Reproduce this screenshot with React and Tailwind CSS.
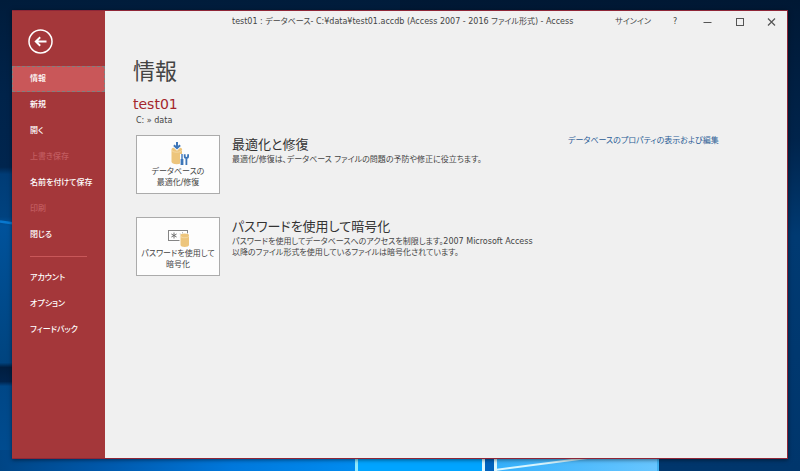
import clsx from 'clsx';

const MAIN_ITEMS = [
  { label: '情報', active: true },
  { label: '新規' },
  { label: '開く' },
  { label: '上書き保存', disabled: true },
  { label: '名前を付けて保存' },
  { label: '印刷', disabled: true },
  { label: '閉じる' },
];

const SUB_ITEMS = [
  { label: 'アカウント' },
  { label: 'オプション' },
  { label: 'フィードバック' },
];

function Wallpaper() {
  return (
    <svg
      className="absolute inset-0 h-full w-full"
      viewBox="0 0 800 471"
      preserveAspectRatio="none"
      aria-hidden="true"
    >
      <defs>
        <linearGradient id="leftSky" x1="0" y1="0" x2="0" y2="1">
          <stop offset="0" stopColor="#001c3b" />
          <stop offset="0.2" stopColor="#00234a" />
          <stop offset="0.355" stopColor="#00254e" />
          <stop offset="0.37" stopColor="#003c76" />
          <stop offset="0.46" stopColor="#00427f" />
          <stop offset="0.48" stopColor="#00529b" />
          <stop offset="0.77" stopColor="#00447f" />
          <stop offset="0.78" stopColor="#001e40" />
          <stop offset="0.81" stopColor="#00234c" />
          <stop offset="0.82" stopColor="#004787" />
          <stop offset="1" stopColor="#004d92" />
        </linearGradient>
        <linearGradient id="rightSky" x1="0" y1="0" x2="0" y2="1">
          <stop offset="0" stopColor="#001834" />
          <stop offset="0.3" stopColor="#00244c" />
          <stop offset="0.5" stopColor="#003a72" />
          <stop offset="1" stopColor="#00366c" />
        </linearGradient>
        <linearGradient id="floor" x1="0" y1="0" x2="1" y2="0">
          <stop offset="0" stopColor="#004585" />
          <stop offset="0.3" stopColor="#0059ac" />
          <stop offset="0.65" stopColor="#0078dc" />
          <stop offset="1" stopColor="#008cf0" />
        </linearGradient>
        <linearGradient id="pane" x1="0" y1="0" x2="1" y2="0">
          <stop offset="0" stopColor="#35b0fb" />
          <stop offset="1" stopColor="#68c6ff" />
        </linearGradient>
      </defs>
      <rect width="800" height="471" fill="#001c3b" />
      <rect width="400" height="471" fill="url(#leftSky)" />
      <rect x="400" width="400" height="471" fill="url(#rightSky)" />
      <path d="M0 221.5 L14 223.5" stroke="#0878cf" strokeWidth="2.5" />
      <rect y="450" width="356" height="21" fill="url(#floor)" />
      <rect x="356" y="450" width="128" height="21" fill="#00a4ff" />
      <rect x="355" y="450" width="3" height="21" fill="#8ce8ff" />
      <rect x="482" y="450" width="3" height="21" fill="#d8f6ff" />
      <rect x="485" y="450" width="9" height="21" fill="#0062bd" />
      <rect x="494" y="450" width="165" height="21" fill="url(#pane)" />
      <path d="M495 470 L595 457" stroke="#d8f6ff" strokeWidth="2" />
      <rect x="494" y="450" width="3" height="21" fill="#d8f6ff" />
      <rect x="657" y="450" width="2" height="21" fill="#3fb0ee" />
    </svg>
  );
}

function NavItem({ label, active, disabled }) {
  return (
    <li>
      <button
        type="button"
        disabled={disabled}
        className={clsx(
          'flex h-[26px] w-full items-center whitespace-nowrap border border-dashed pl-[17px] text-left',
          active ? 'border-[#7f8080] bg-[#c95759]' : 'border-transparent',
          disabled ? 'text-[#c25c60]' : 'text-white',
        )}
      >
        {label}
      </button>
    </li>
  );
}

function Sidebar() {
  return (
    <nav className="w-[93px] shrink-0 bg-[#a4373a] pt-[18px] text-[8px] font-medium">
      <button type="button" aria-label="戻る" className="mb-3 ml-4 block">
        <svg width="25" height="25" viewBox="0 0 25 25" fill="none" stroke="#fff">
          <circle cx="12.5" cy="12.5" r="11.5" strokeWidth="1.5" />
          <path d="M18.5 12.5H8M12.2 8.3 7.8 12.5l4.4 4.2" strokeWidth="1.9" />
        </svg>
      </button>
      <ul>
        {MAIN_ITEMS.map(item => <NavItem key={item.label} {...item} />)}
      </ul>
      <hr className="my-2 ml-[18px] w-[57px] border-[#c95759]" />
      <ul>
        {SUB_ITEMS.map(item => <NavItem key={item.label} {...item} />)}
      </ul>
    </nav>
  );
}

function TitleBar() {
  return (
    <header className="flex h-[22px] items-center text-[8px] text-[#444]">
      <h1 className="flex-1 whitespace-nowrap pl-[127px]">
        test01 : データベース- C:¥data¥test01.accdb (Access 2007 - 2016 ファイル形式) - Access
      </h1>
      <button type="button" className="whitespace-nowrap">サインイン</button>
      <button type="button" aria-label="ヘルプ" className="ml-2 w-8">?</button>
      <button type="button" aria-label="最小化" className="flex w-8 justify-center">
        <svg width="9" height="9" stroke="#555"><path d="M.5 4.5h8" /></svg>
      </button>
      <button type="button" aria-label="最大化" className="flex w-8 justify-center">
        <svg width="9" height="9" fill="none" stroke="#555"><rect x="1.5" y=".5" width="7" height="7" /></svg>
      </button>
      <button type="button" aria-label="閉じる" className="flex w-8 justify-center">
        <svg width="9" height="9" stroke="#555"><path d="M1 .5l7 7M8 .5l-7 7" strokeWidth="1.2" /></svg>
      </button>
    </header>
  );
}

function RepairIcon() {
  return (
    <svg className="ml-1" width="20" height="24" viewBox="0 0 20 24" fill="none">
      <path d="M1.5 8v11.5c0 1.8 2.3 2.7 5.2 2.7s5.3-.9 5.3-2.7V8z" fill="#edc57c" />
      <ellipse cx="6.8" cy="7.5" rx="5.3" ry="2.3" fill="#edc57c" />
      <path d="M1.5 8c.5 1.4 2.4 2.2 5.2 2.2S11.6 9.4 12 8" stroke="#f9e5bf" strokeWidth=".6" />
      <path d="M7 0v6M3.8 3.7 7 6.7l3.2-3" stroke="#fdfdfd" strokeWidth="3" />
      <path d="M7 0v5.5M3.9 3.2 7 6.2l3.1-3" stroke="#3d76b8" strokeWidth="2" />
      <path d="M10 12h9.5v12H10z" fill="#fdfdfd" />
      <path d="M12 12v5.5" stroke="#3d76b8" strokeWidth="1.4" />
      <path d="M12 17v6" stroke="#3d76b8" strokeWidth="2.8" />
      <path d="M14.7 12.2v2.1c0 1 .8 1.7 1.7 1.7s1.7-.7 1.7-1.7v-2.1M16.4 16v7" stroke="#3d76b8" strokeWidth="1.8" />
    </svg>
  );
}

function PasswordIcon() {
  return (
    <svg className="ml-px" width="22" height="20" viewBox="0 0 22 20" fill="none">
      <rect x=".5" y="2.5" width="19" height="10" fill="#fff" stroke="#858585" />
      <path d="M6 4.5v6M3.4 6l5.2 3M8.6 6 3.4 9M14.5 4.500v6M11.900 6l5.200 3M17.100 6l-5.200 3" stroke="#666" strokeWidth=".9" />
      <path d="M11.5 9c0-3 1.500-4 5.200-4s5.300 1 5.300 4v9H11.500z" fill="#fdfdfd" />
      <path d="M12.5 8v9c0 1.3 1.8 2 4.2 2s4.3-.7 4.3-2V8z" fill="#edc57c" />
      <ellipse cx="16.7" cy="7.5" rx="4.3" ry="1.9" fill="#edc57c" />
      <path d="M12.5 8c.5 1.2 2 1.7 4.2 1.7S20.6 9.2 21 8" stroke="#f9e5bf" strokeWidth=".6" />
    </svg>
  );
}

function ActionRow({ icon, button, title, children }) {
  return (
    <section className="flex gap-3">
      <button
        type="button"
        className="flex h-[59px] w-[84px] shrink-0 flex-col items-center justify-end border border-[#ababab] bg-[#fdfdfd] pb-[5px] text-[8px] leading-[11px] text-[#444]"
      >
        {icon}
        {button.map(line => <span key={line} className="whitespace-nowrap">{line}</span>)}
      </button>
      <div className="w-[310px]">
        <h3 className="text-[13px] leading-[19px] text-[#333]">{title}</h3>
        <p className="whitespace-nowrap text-[8px] leading-[11px] text-[#444]">{children}</p>
      </div>
    </section>
  );
}

export default function App() {
  return (
    <div className="relative flex min-h-screen px-3 pt-[10px] pb-3 font-['DejaVu_Sans','Noto_Sans_CJK_JP',sans-serif] [font-feature-settings:'palt']">
      <Wallpaper />
      <div className="relative flex flex-1 border-t border-r border-b border-[#8f2637] bg-[#f0f0f0] shadow-[0_1px_4px_rgba(0,0,0,0.5)]">
        <Sidebar />
        <div className="min-w-0 flex-1">
          <TitleBar />
          <main className="pl-7">
            <h2 className="pt-[22px] text-[22px] leading-[34px] text-[#444]">情報</h2>
            <div className="mt-[6px] text-[14px] leading-[18px] text-[#a4262c]">test01</div>
            <div className="ml-[3px] text-[8px] leading-4 text-[#444]">C: » data</div>
            <div className="mt-[6px] ml-[3px] flex gap-[26px]">
              <div className="flex flex-col gap-[23px]">
                <ActionRow icon={<RepairIcon />} button={['データベースの', '最適化/修復']} title="最適化と修復">
                  最適化/修復は、データベース ファイルの問題の予防や修正に役立ちます。
                </ActionRow>
                <ActionRow icon={<PasswordIcon />} button={['パスワードを使用して', '暗号化']} title="パスワードを使用して暗号化">
                  パスワードを使用してデータベースへのアクセスを制限します。2007 Microsoft Access
                  <br />
                  以降のファイル形式を使用しているファイルは暗号化されています。
                </ActionRow>
              </div>
              <a href="#properties" className="self-start whitespace-nowrap text-[8px] leading-[11px] text-[#2b5d96]">
                データベースのプロパティの表示および編集
              </a>
            </div>
          </main>
        </div>
      </div>
    </div>
  );
}
